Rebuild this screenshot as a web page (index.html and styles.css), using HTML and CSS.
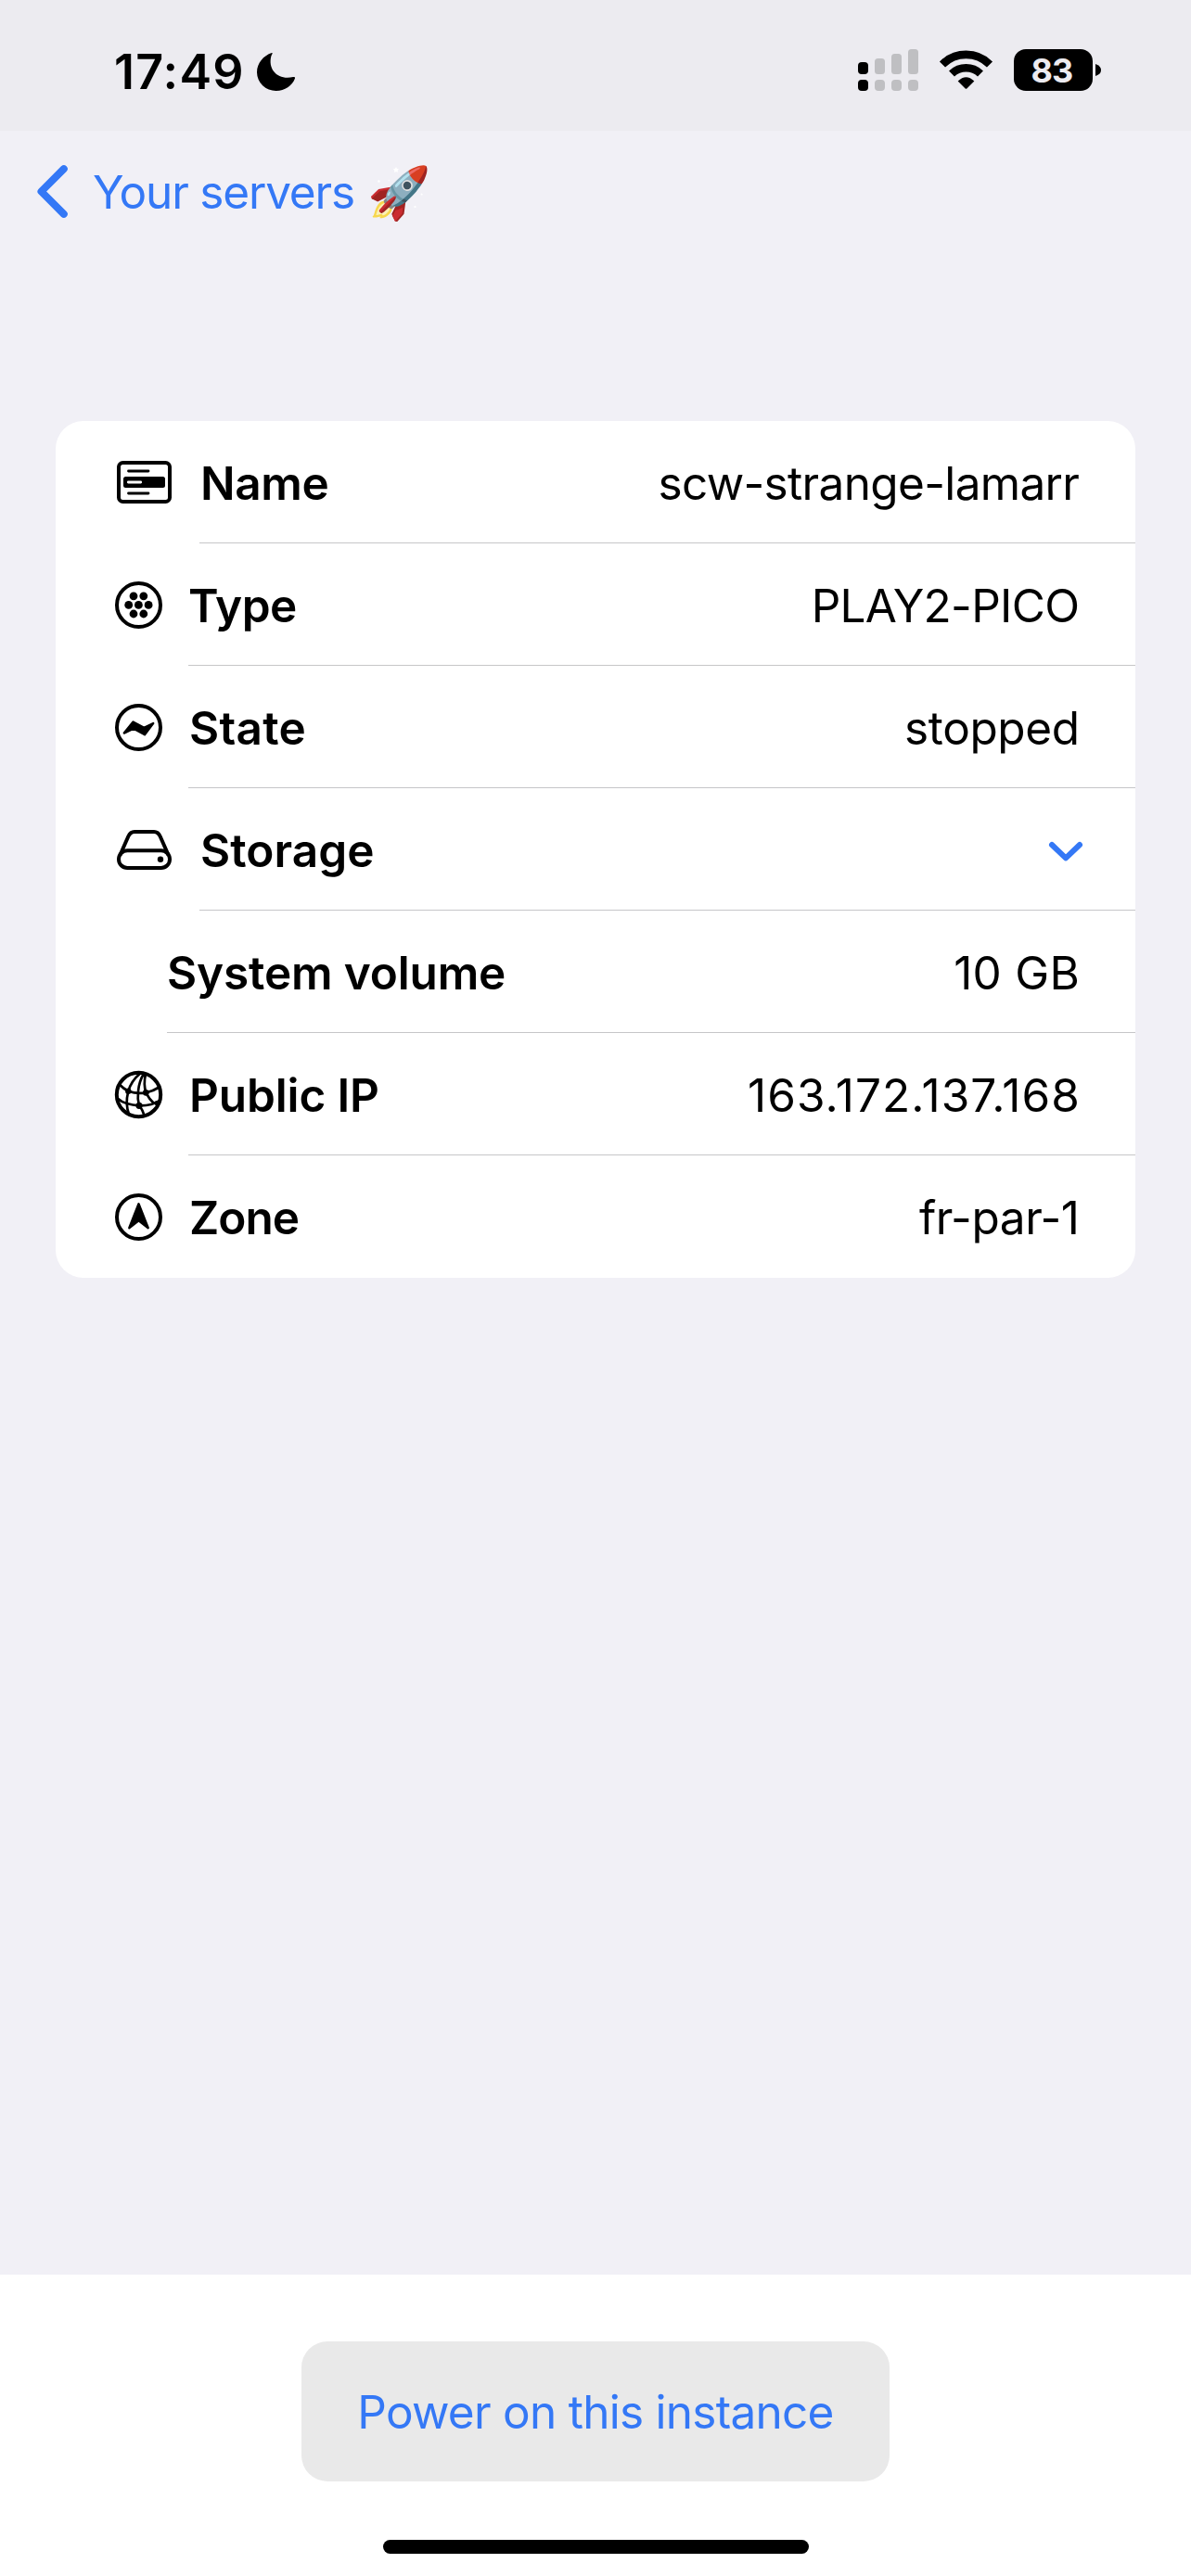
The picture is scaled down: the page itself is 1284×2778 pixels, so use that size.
FILE: index.html
```html
<!DOCTYPE html>
<html lang="en">
<head>
<meta charset="utf-8">
<title>Server details</title>
<link rel="stylesheet" href="styles.css">
</head>
<body>
<div class="screen">
  <header class="status">
    <div class="status-left">
      <span class="time">17:49</span>
      <svg class="moon" width="41" height="41" viewBox="0 0 41 41"><path d="M16 0C7 3 0 11 0 21A20.5 20.2 0 0 0 20.7 41C30 41 38 35.500 41 27.500C41.300 26 40 25.700 39 26C24 30 11 19 15.500 3C17 .5 17-.2 16 0Z"/></svg>
    </div>
    <div class="status-right">
      <svg width="65" height="45" viewBox="0 0 65 45">
        <g class="faint"><rect x="18" y="10" width="11" height="17" rx="3.500"/><rect x="36" y="5" width="11" height="22" rx="3.500"/><rect x="54" y="0" width="11" height="27" rx="3.500"/><rect x="18" y="33" width="11" height="12" rx="4"/><rect x="36" y="33" width="11" height="12" rx="4"/><rect x="54" y="33" width="11" height="12" rx="4"/></g>
        <rect y="14" width="11" height="13" rx="4"/><rect y="33" width="11" height="12" rx="4"/>
      </svg>
      <svg class="wifi" width="57" height="42" viewBox="0 0 57 42">
        <path class="arc" d="M3 15.500A36 36 0 0 1 54 15.500M13 25.500A22.500 22.500 0 0 1 44 25.500"/>
        <path d="M19.700 33.500Q28.500 25 37.300 33.500L29.300 41.500Q28.500 42.200 27.700 41.500Z"/>
      </svg>
      <div class="battery"><span class="level">83</span></div>
      <svg class="nub" width="6" height="13" viewBox="0 0 6 13"><path d="M0 0Q6 2 6 6.500T0 13Z"/></svg>
    </div>
  </header>

  <nav class="nav">
    <svg class="back" width="33" height="57" viewBox="0 0 33 57"><path d="M28.800 4.200L4.500 28.500L28.800 52.800"/></svg>
    <span class="nav-title">Your servers</span>
    <span class="rocket">🚀</span>
  </nav>

  <main class="content">
    <section class="card">
      <div class="row">
        <div class="icon wide"><svg width="59" height="46" viewBox="0 0 59 46">
          <rect class="line" x="2" y="2" width="55" height="42" rx="4.500"/>
          <path class="thin" d="M12.500 11H34M12.500 35H34"/>
          <rect x="7" y="17" width="45" height="12" rx="2.500"/>
          <path class="thin light" d="M12.300 23H25.700"/>
        </svg></div>
        <div class="cell"><span class="label name">Name</span><span class="value host">scw-strange-lamarr</span></div>
      </div>
      <div class="row">
        <div class="icon"><svg width="51" height="51" viewBox="0 0 51 51">
          <circle class="line" cx="25.500" cy="25.500" r="23.500"/>
          <circle cx="20" cy="15.800" r="4.400"/><circle cx="30.800" cy="15.800" r="4.400"/><circle cx="14.700" cy="25.400" r="4.400"/><circle cx="25.400" cy="25.400" r="4.400"/><circle cx="36.100" cy="25.400" r="4.400"/><circle cx="20" cy="35" r="4.400"/><circle cx="30.800" cy="35" r="4.400"/>
        </svg></div>
        <div class="cell"><span class="label type">Type</span><span class="value plan">PLAY2-PICO</span></div>
      </div>
      <div class="row">
        <div class="icon"><svg width="51" height="51" viewBox="0 0 51 51">
          <circle class="line" cx="25.500" cy="25.500" r="23.500"/>
          <path class="solid" d="M9.800 31.600L19.500 19.500L31.300 25.900L41.200 21L32 33.200L20 26.700Z"/>
        </svg></div>
        <div class="cell"><span class="label state">State</span><span class="value stopped">stopped</span></div>
      </div>
      <div class="row">
        <div class="icon wide"><svg width="59" height="43" viewBox="0 0 59 43">
          <rect class="line" x="2" y="22.300" width="55" height="18.700" rx="9.300"/>
          <path class="line" d="M3.500 27L12.300 7Q14.500 2 19 2H40Q44.500 2 46.700 7L55.500 27"/>
          <circle cx="47" cy="31.700" r="3.200"/>
        </svg></div>
        <div class="cell"><span class="label storage">Storage</span><svg class="chevron" width="36" height="21" viewBox="0 0 36 21"><path d="M3 3L18 17.300L33 3"/></svg></div>
      </div>
      <div class="row">
        <div class="icon none"></div>
        <div class="cell"><span class="label volume">System volume</span><span class="value size">10 GB</span></div>
      </div>
      <div class="row">
        <div class="icon"><svg width="51" height="51" viewBox="0 0 51 51">
          <circle class="line" cx="25.500" cy="25.500" r="23.700"/>
          <path class="mesh" d="M4.500 14.300Q9 19 14.300 21.700Q24 25 33.300 23.300Q41 21.800 47.500 17.500M2 29Q7 33.500 12.700 35Q19 37 26 37.300Q33 37.500 39 36Q45 34.500 48.500 31.500M27 2.700Q17.500 10.500 14.300 21.700Q12.500 29 12.700 35Q13 42 15.300 47.500M31 3Q26 11 25 21.700Q24 30 26 37.300Q30.500 42.500 31.300 48.500M33 3.300Q30.500 14 33.300 23.300Q37 30.500 42.500 35.500"/>
          <circle cx="14.300" cy="21.700" r="3.200"/><circle cx="33.300" cy="23.300" r="3.400"/><circle cx="26" cy="37.300" r="3.600"/><circle cx="45" cy="34.500" r="2.600"/>
        </svg></div>
        <div class="cell"><span class="label ip">Public IP</span><span class="value address">163.172.137.168</span></div>
      </div>
      <div class="row">
        <div class="icon"><svg width="51" height="51" viewBox="0 0 51 51">
          <circle class="line" cx="25.500" cy="25.500" r="23.500"/>
          <path class="solid" d="M25.500 11.300L35.700 37.200L25.500 29.200L15.300 37.200Z"/>
        </svg></div>
        <div class="cell"><span class="label zone">Zone</span><span class="value region">fr-par-1</span></div>
      </div>
    </section>
  </main>

  <footer class="footer">
    <button class="power" type="button">Power on this instance</button>
    <div class="home"></div>
  </footer>
</div>
</body>
</html>
```
FILE: styles.css
```css
* { box-sizing: border-box; }

body {
  margin: 0;
  background: #f1f0f6;
  color: #000;
  font-family: Inter, "Liberation Sans", sans-serif;
  font-size: 49.5px;
  line-height: 60px;
}

svg { display: block; flex: none; overflow: visible; }

.screen { width: 1284px; height: 2778px; display: flex; flex-direction: column; }

/* Status bar */
.status {
  height: 141px;
  padding: 0 97px 0 123px;
  display: flex;
  justify-content: space-between;
  background: #ecebf0;
}
.status-left { display: flex; align-items: flex-start; padding-top: 48px; }
.time { font-size: 52px; font-weight: 600; letter-spacing: 1.2px; }
.moon { margin: 9px 0 0 13px; }
.status-right { display: flex; align-items: flex-start; padding-top: 53px; }
.faint { fill: #bfbfc2; }
.wifi { margin: 1px 23px 0; }
.arc { fill: none; stroke: #000; stroke-width: 8.6; }
.battery {
  width: 85px;
  height: 45px;
  padding-right: 3px;
  display: flex;
  align-items: center;
  justify-content: center;
  border-radius: 13px;
  background: #000;
  color: #ecebf0;
}
.level { font-size: 36px; font-weight: 700; letter-spacing: -.8px; }
.nub { margin: 16px 0 0 3px; }

/* Navigation */
.nav { height: 131px; padding-left: 40px; display: flex; align-items: center; color: #3478f6; }
.back, .chevron { fill: none; stroke: #3478f6; stroke-linecap: round; stroke-linejoin: round; }
.back { stroke-width: 8; }
.nav-title { margin-left: 27px; letter-spacing: -1.19px; white-space: nowrap; }
.rocket { margin-left: 14px; font-size: 55px; }

/* Details list */
.content { flex: 1; padding: 182px 60px 0; }
.card { border-radius: 30px; background: #fff; }
.row { height: 132px; display: flex; align-items: stretch; }
.icon { width: 143px; padding-left: 64px; padding-top: 1px; display: flex; align-items: center; }
.icon.wide { width: 155px; padding-left: 66px; padding-top: 0; }
.icon.none { width: 120px; }
.cell {
  flex: 1;
  padding: 3px 60px 0 0;
  display: flex;
  align-items: center;
  justify-content: space-between;
  border-bottom: 1px solid #c6c6c8;
  white-space: nowrap;
}
.row:last-child .cell { border-bottom-color: transparent; }
.label { font-weight: 600; }
.label, .value { letter-spacing: var(--track); }
.value { margin-right: calc(var(--track) * -1); }
.chevron { margin: 3px -3px 0 0; stroke-width: 6; }

.name { --track: -.4px; margin-left: 1px; }
.type { --track: -.5px; }
.state { --track: .3px; margin-left: 1px; }
.storage { --track: .07px; margin-left: 1px; }
.volume { --track: -.15px; }
.ip { --track: -.12px; margin-left: 1px; }
.zone { --track: -1px; margin-left: 1px; }
.host { --track: -.66px; }
.plan { --track: -.69px; }
.stopped { --track: -.4px; }
.size { --track: .3px; }
.address { --track: 1.1px; }
.region { --track: -.4px; }

/* Icon strokes */
.line { fill: none; stroke: #000; stroke-width: 4; }
.thin { fill: none; stroke: #000; stroke-width: 2.8; stroke-linecap: round; }
.light { stroke: #fff; }
.mesh { fill: none; stroke: #000; stroke-width: 2.7; }
.solid { stroke: #000; stroke-width: 2.4; stroke-linejoin: round; }

/* Bottom action */
.footer {
  height: 325px;
  padding-top: 72px;
  display: flex;
  flex-direction: column;
  align-items: center;
  background: #fff;
}
.power {
  width: 634px;
  height: 151px;
  padding: 1px 0 0;
  border: 0;
  border-radius: 28px;
  background: #e9e9e9;
  color: #3478f6;
  font: inherit;
  letter-spacing: -.73px;
}
.home { width: 459px; height: 15px; margin-top: 63px; border-radius: 8px; background: #000; }
```
